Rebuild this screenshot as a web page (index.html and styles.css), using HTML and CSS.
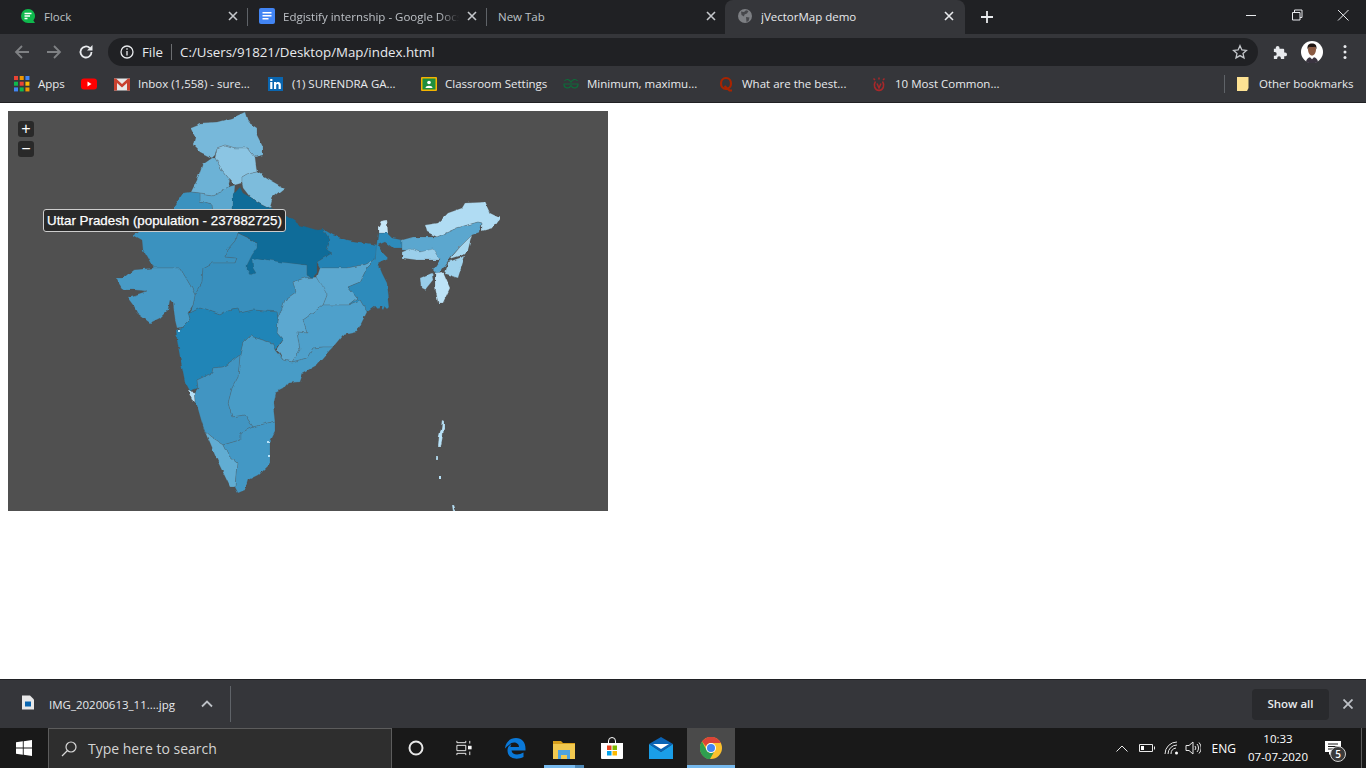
FILE: index.html
```html
<!DOCTYPE html>
<html lang="en">
<head>
    <meta charset="UTF-8">
    <title>jVectorMap demo</title>
    <link rel="stylesheet" href="styles.css">
</head>
<body>
    <div class="tabbar">
        <div class="tab">
            <svg class="fav" viewBox="0 0 16 16"><path class="g-green" d="M8 1a7 7 0 1 0 0 14h7l-1.600-2.600A7 7 0 0 0 8 1z"/><path class="g-white" d="M4.500 4.800h7v1.500h-7zM4.500 7.300h5.500v1.500H4.500zM4.500 9.800h3v1.500h-3z"/></svg>
            <span class="tab-title">Flock</span>
            <svg class="tab-x" viewBox="0 0 10 10"><path d="M1 1l8 8M9 1l-8 8"/></svg>
        </div>
        <div class="tab sep">
            <svg class="fav" viewBox="0 0 16 16"><rect class="g-blue" width="16" height="16" rx="2"/><path class="g-white" d="M3.500 4h9v1.500h-9zM3.500 7h9v1.500h-9zM3.500 10h6v1.500h-6z"/></svg>
            <span class="tab-title fade">Edgistify internship - Google Docs</span>
            <svg class="tab-x" viewBox="0 0 10 10"><path d="M1 1l8 8M9 1l-8 8"/></svg>
        </div>
        <div class="tab sep nofav">
            <span class="tab-title">New Tab</span>
            <svg class="tab-x" viewBox="0 0 10 10"><path d="M1 1l8 8M9 1l-8 8"/></svg>
        </div>
        <div class="tab active">
            <svg class="fav" viewBox="0 0 16 16"><circle class="g-grey" cx="8" cy="8" r="7"/><path class="g-dark" d="M4 3.500l3 .5 2-1.800 2.500.8-1.500 2.500-2.500 1-.5 2-2.500-1.500zM9 9l3.500.5-1 3.500-2 1z"/></svg>
            <span class="tab-title">jVectorMap demo</span>
            <svg class="tab-x" viewBox="0 0 10 10"><path d="M1 1l8 8M9 1l-8 8"/></svg>
        </div>
        <svg class="newtab" viewBox="0 0 12 12"><path d="M6 0v12M0 6h12"/></svg>
        <div class="winbtns">
            <svg viewBox="0 0 46 20"><path d="M18 10.500h10"/></svg>
            <svg viewBox="0 0 46 20"><path d="M18.500 7.500h7.500v7.500h-7.500zM20.500 7.500v-2.500h7.500v7.500h-2"/></svg>
            <svg viewBox="0 0 46 20"><path d="M18 5l10.500 10.500M28.500 5L18 15.500"/></svg>
        </div>
    </div>

    <div class="toolbar">
        <svg class="nav dim" viewBox="0 0 16 16"><path d="M15 8H2M8 2L2 8l6 6"/></svg>
        <svg class="nav dim" viewBox="0 0 16 16"><path d="M1 8h13M8 2l6 6-6 6"/></svg>
        <svg class="nav" viewBox="0 0 16 16"><path d="M13.500 8a5.500 5.500 0 1 1-1.700-4"/><path class="g-light" d="M14.500 1v5.500H9z"/></svg>
        <div class="omnibox">
            <svg class="info" viewBox="0 0 14 14"><circle cx="7" cy="7" r="6"/><path d="M7 6v4.500M7 3.300v1.500"/></svg>
            <span class="scheme">File</span>
            <span class="url">C:/Users/91821/Desktop/Map/index.html</span>
            <svg class="star" viewBox="0 0 16 16"><path d="M8 1.700l1.900 4.200 4.500.5-3.400 3 1 4.500L8 11.600l-4 2.300 1-4.500-3.400-3 4.500-.5z"/></svg>
        </div>
        <svg class="puzzle" viewBox="0 0 16 16"><path d="M6 1a2 2 0 0 1 2 2v1h4a1 1 0 0 1 1 1v3h1a2 2 0 1 1 0 4h-1v3H9.500v-1a2 2 0 1 0-4 0v1H2v-3.500h1a2 2 0 1 0 0-4H2V4h2V3a2 2 0 0 1 2-2z"/></svg>
        <svg class="avatar" viewBox="0 0 22 22"><circle class="g-white" cx="11" cy="11" r="11"/><path class="g-skin" d="M7 8c0-3 1.800-4.500 4-4.500S15 5 15 8c0 4-1.800 6.500-4 6.500S7 12 7 8z"/><path class="g-hair" d="M6.500 8.500C6 4 8 2.500 11 2.500s5 1.500 4.500 6c-.4-1.800-1-2.500-2-2.800-1.700.4-3.600.4-5 0-1 .4-1.600 1.200-2 2.800z"/><path class="g-shirt" d="M5 20.500c.5-2.500 2-3.800 4-4.300l2 2 2-2c2 .5 3.500 1.800 4 4.300a11 11 0 0 1-12 0z"/></svg>
        <svg class="menu" viewBox="0 0 4 16"><circle cx="2" cy="2.500" r="1.500"/><circle cx="2" cy="8" r="1.500"/><circle cx="2" cy="13.500" r="1.500"/></svg>
    </div>

    <div class="bookmarks">
        <div class="bm">
            <svg class="fav" viewBox="0 0 14 14"><rect class="g-red" width="3.500" height="3.500"/><rect class="g-orange" x="5" width="3.500" height="3.500"/><rect class="g-blue" x="10" width="3.500" height="3.500"/><rect class="g-green" y="5" width="3.500" height="3.500"/><rect class="g-red" x="5" y="5" width="3.500" height="3.500"/><rect class="g-yellow" x="10" y="5" width="3.500" height="3.500"/><rect class="g-blue" y="10" width="3.500" height="3.500"/><rect class="g-green" x="5" y="10" width="3.500" height="3.500"/><rect class="g-orange" x="10" y="10" width="3.500" height="3.500"/></svg>
            <span>Apps</span>
        </div>
        <div class="bm">
            <svg class="fav" viewBox="0 0 16 16"><rect class="g-yt" y="2.500" width="16" height="11" rx="3"/><path class="g-white" d="M6.500 5.500l4 2.500-4 2.500z"/></svg>
        </div>
        <div class="bm">
            <svg class="fav" viewBox="0 0 16 16"><rect class="g-paper" y="2.500" width="16" height="12"/><path class="g-gm" d="M0 2.500h2L8 8l6-5.500h2v12h-3V7L8 11.500 3 7v7.500H0z"/></svg>
            <span>Inbox (1,558) - sure...</span>
        </div>
        <div class="bm">
            <svg class="fav" viewBox="0 0 16 16"><rect class="g-li" y="1" width="15" height="14"/><path class="g-white" d="M2.200 6h2.200v7H2.200zM2.200 3h2.200v2H2.200zM6 6h2.100v1c.8-1.500 4.700-1.900 4.700 1.800V13h-2.200V9.300c0-1.800-2.400-1.600-2.400 0V13H6z"/></svg>
            <span>(1) SURENDRA GA...</span>
        </div>
        <div class="bm">
            <svg class="fav" viewBox="0 0 16 16"><rect class="g-cls" y="1" width="16" height="14" rx="1"/><rect class="g-clsgreen" x="1.500" y="2.500" width="13" height="11"/><circle class="g-white" cx="8" cy="6.500" r="1.800"/><path class="g-white" d="M4.500 12c0-3 7-3 7 0z"/></svg>
            <span>Classroom Settings</span>
        </div>
        <div class="bm">
            <svg class="fav" viewBox="0 0 16 16"><path class="gfg" d="M8 8h7a3.500 3.500 0 0 1-6.800 1.500M8 8H1a3.500 3.500 0 0 0 6.800 1.500M8.200 6.500A3.500 3.500 0 0 1 14.500 5M7.800 6.500A3.500 3.500 0 0 0 1.500 5"/></svg>
            <span>Minimum, maximu...</span>
        </div>
        <div class="bm">
            <svg class="fav" viewBox="0 0 16 16"><path class="quora" d="M8 2C5 2 3 4.500 3 7.500S5 13 8 13s5-2.500 5-5.500S11 2 8 2zM6.500 10l5 4.500h2.500"/></svg>
            <span>What are the best...</span>
        </div>
        <div class="bm">
            <svg class="fav" viewBox="0 0 16 16"><path class="hack" d="M4.500 5.500C2 9 3.500 14 8 14.500 12.500 14 14 9 11.500 5.500M8 3.500v-2M4 4L2.500 2.500M12 4l1.500-1.500M6 7.500L8 12l2-4.500"/></svg>
            <span>10 Most Common...</span>
        </div>
        <div class="bm-other">
            <svg class="folder" viewBox="0 0 12 14"><path d="M0 0h11.500v11L10 14H0z"/></svg>
            <span>Other bookmarks</span>
        </div>
    </div>

    <div class="page">
        <div class="map">
            <svg class="map-svg" viewBox="8 111 600 400">
                <defs>
                    <filter id="rough" x="0" y="0" width="100%" height="100%" color-interpolation-filters="sRGB">
                        <feTurbulence type="fractalNoise" baseFrequency="0.13" numOctaves="2" seed="4"/>
                        <feDisplacementMap in="SourceGraphic" scale="3.500" xChannelSelector="R" yChannelSelector="G"/>
                    </filter>
                </defs>
                <g class="states">
                    <polygon class="jk" points="190,127 200,123 217,122 232,118 245,112 248,122 257,128 257,135 263,147 263,155 255,157 248,148 235,148 225,145 217,148 215,155 212,158 200,152 193,145 195,137"/>
                    <polygon class="hp" points="217,148 225,145 235,148 248,148 255,157 257,172 247,174 242,177 242,183 235,185 230,180 222,170 215,158"/>
                    <polygon class="pb" points="212,158 215,158 222,170 230,180 228,187 220,192 213,195 200,193 191,192 197,180 202,165"/>
                    <polygon class="uk" points="242,177 247,174 257,172 270,180 284,188 273,197 270,208 260,203 250,197 243,188 242,183"/>
                    <polygon class="hr" points="213,195 220,192 228,187 235,185 233,208 238,233 225,228 213,215 212,205 200,202 200,193"/>
                    <polygon class="rj" points="191,192 200,193 200,202 212,205 213,215 233,228 238,233 236,240 227,250 225,257 237,258 235,263 212,263 203,268 202,282 195,295 190,285 180,268 153,268 150,262 143,250 142,240 133,235 173,208 183,193"/>
                    <polygon class="mp" points="238,233 257,242 260,258 307,265 307,275 312,278 317,277 305,278 293,282 296,292 285,300 278,320 277,312 253,310 240,313 238,308 228,310 220,315 200,308 190,313 193,305 195,295 202,282 203,268 212,263 235,263 237,258 225,257 227,250 236,240"/>
                    <polygon class="up" points="240,187 243,193 250,197 260,203 270,208 285,215 300,225 317,230 323,229 330,240 327,250 332,253 317,262 317,273 312,278 307,275 307,265 280,262 257,258 252,259 253,268 256,273 251,275 247,270 247,265 252,255 257,248 257,242 247,237 238,233 233,208 233,195"/>
                    <polygon class="br" points="323,229 333,235 347,240 360,242 378,245 375,260 363,265 347,268 320,268 317,262 332,253 327,250 330,240"/>
                    <polygon class="jh" points="317,277 320,268 347,268 363,265 375,260 367,268 360,282 348,287 357,298 348,305 333,305 323,305 327,295"/>
                    <polygon class="wb" points="378,233 387,233 392,238 402,240 402,248 393,248 385,242 378,245 383,253 388,258 378,263 382,273 387,283 390,307 388,309 385,306 383,310 380,306 378,309 375,306 367,312 360,300 348,305 357,298 348,287 360,282 367,268 375,260"/>
                    <polygon class="sk" points="378,227 381,221 387,220 388,233 378,233"/>
                    <polygon class="cg" points="293,282 305,278 317,277 322,285 327,295 323,305 313,313 303,320 307,333 297,332 300,350 292,362 283,360 277,350 283,340 277,333 278,320 285,300 296,292"/>
                    <polygon class="od" points="323,305 333,305 348,305 360,300 367,312 363,320 357,332 343,335 333,347 323,347 313,348 307,358 292,362 300,350 297,332 307,333 303,320 313,313"/>
                    <polygon class="gj" points="116,278 123,278 133,270 153,268 180,268 190,285 195,295 193,305 188,313 190,320 183,327 177,328 175,320 173,303 170,300 168,310 160,318 150,323 137,313 133,305 127,297 135,295 147,291 135,290 123,290 118,282"/>
                    <polygon class="mh" points="188,313 190,313 200,308 220,315 228,310 238,308 240,313 253,310 277,312 278,320 277,333 283,340 275,350 272,343 250,336 243,343 240,355 223,367 213,368 212,373 197,380 198,388 190,391 185,382 180,357 177,340 176,330 183,327 190,320"/>
                    <polygon class="ap" points="250,336 272,343 275,350 283,360 292,362 307,358 313,348 323,347 333,347 330,350 317,365 303,373 300,382 288,383 283,389 275,393 273,403 275,421 253,427 245,415 232,417 228,403 232,388 238,377 240,355 243,343"/>
                    <polygon class="ka" points="197,380 212,373 213,368 223,367 240,355 238,377 232,388 228,403 232,417 245,415 253,427 240,433 240,440 223,445 212,438 205,432 202,423 196,402 195,392 198,388"/>
                    <polygon class="kl" points="205,432 212,438 223,445 228,455 237,463 235,487 230,487 217,460"/>
                    <polygon class="tn" points="223,445 240,440 240,433 253,427 275,421 275,432 270,442 270,463 258,475 248,480 245,490 238,493 235,487 237,463 228,455"/>
                    <polygon class="ga" points="188,391 195,392 196,402 192,400"/>
                    <polygon class="ar" points="425,225 438,223 448,213 462,208 465,203 485,202 490,213 500,218 493,228 482,231 482,223 478,222 457,228 437,237 427,232"/>
                    <polygon class="as" points="402,240 413,237 437,237 457,228 478,222 482,223 480,232 472,235 460,247 450,258 442,270 437,275 433,270 440,260 433,250 422,252 402,250"/>
                    <polygon class="nl" points="472,235 468,250 463,255 450,259 460,247"/>
                    <polygon class="mn" points="448,262 465,256 458,278 445,274"/>
                    <polygon class="ml" points="402,252 410,249 420,252 433,249 440,260 417,260 402,258"/>
                    <polygon class="tr" points="420,278 432,273 433,280 425,290 421,288"/>
                    <polygon class="mz" points="435,273 443,272 450,288 443,303 438,303 435,287"/>
                    <polygon class="an" points="442,420 444,421 444,428 443,436 441,447 438,447 439,436 441,428"/>
                    <polygon class="an" points="436,456 438,456 438,460 436,460"/>
                    <polygon class="an" points="452,505 454,505 456,511 453,511"/>
                    <rect class="an" x="439" y="477" width="2" height="2"/>
                    <rect class="an" x="178" y="329" width="2" height="2"/>
                    <rect class="an" x="268" y="441" width="2" height="2"/>
                    <rect class="an" x="268" y="455" width="2" height="2"/>
                </g>
            </svg>
            <div class="zoom zoom-in">+</div>
            <div class="zoom zoom-out">&minus;</div>
            <div class="tip">Uttar Pradesh (population - 237882725)</div>
        </div>
    </div>

    <div class="shelf">
        <svg class="file" viewBox="0 0 12 14"><path class="g-paper" d="M0 0h8l4 4v10H0z"/><rect class="g-li" x="3" y="6" width="6" height="5"/></svg>
        <span class="file-name">IMG_20200613_11....jpg</span>
        <svg class="chev" viewBox="0 0 12 8"><path d="M1 6.500l5-5 5 5"/></svg>
        <div class="shelf-sep"></div>
        <div class="show-all">Show all</div>
        <svg class="shelf-x" viewBox="0 0 10 10"><path d="M.5.500l9 9M9.500.500l-9 9"/></svg>
    </div>

    <div class="taskbar">
        <div class="tb-btn">
            <svg class="ico16" viewBox="0 0 16 16"><path class="g-white" d="M0 2.300l6.800-1v6.300H0zM7.700 1.200L16 0v7.600H7.700zM0 8.400h6.800v6.300l-6.800-1zM7.700 8.400H16V16l-8.300-1.200z"/></svg>
        </div>
        <div class="search">
            <svg class="lens" viewBox="0 0 16 16"><circle cx="10" cy="6" r="5"/><path d="M6.500 9.500L1 15"/></svg>
            <span>Type here to search</span>
        </div>
        <div class="tb-btn">
            <svg class="ico16" viewBox="0 0 16 16"><circle class="ring" cx="8" cy="8" r="6.500"/></svg>
        </div>
        <div class="tb-btn">
            <svg class="ico16 thin" viewBox="0 0 18 16"><path d="M1 0v2h10V0M1 16v-2h10v2M1 5h10v6H1z"/><path d="M15.500 0v3M15.500 12v4"/><rect class="g-white" x="14" y="6" width="3" height="3"/></svg>
        </div>
        <div class="tb-btn first-app">
            <svg class="ico22" viewBox="0 0 22 22"><path class="g-edge" d="M1 11C2 4 7 1 12 1c6 0 9.500 4.500 9.500 10.500v2H7.500c.5 4.500 7 5 12 2v4.500c-7 3.500-16 1.500-16-6.500 0-3 1.500-5 4-6.500-.7 1-1 2-1.100 3h8.600c0-5-7-6-10-2-1.500 1-2.500 2-4 3.500z"/></svg>
        </div>
        <div class="tb-btn running">
            <svg class="ico22" viewBox="0 0 22 18"><path class="g-folderdk" d="M0 0h8l2 2h12v4H0z"/><rect class="g-folder" y="3" width="22" height="15"/><path class="g-sky" d="M5 9h12v9h-3v-4H8v4H5z"/></svg>
        </div>
        <div class="tb-btn">
            <svg class="ico22" viewBox="0 0 22 22"><path class="bag" d="M7.500 6V4a3.500 3.500 0 0 1 7 0v2"/><path class="g-white" d="M0 6h22v15a1 1 0 0 1-1 1H1a1 1 0 0 1-1-1z"/><rect class="g-msred" x="6" y="8.500" width="4.500" height="4.500"/><rect class="g-msgreen" x="11.500" y="8.500" width="4.500" height="4.500"/><rect class="g-msblue" x="6" y="14" width="4.500" height="4.500"/><rect class="g-msyellow" x="11.500" y="14" width="4.500" height="4.500"/></svg>
        </div>
        <div class="tb-btn mail">
            <svg class="ico24" viewBox="0 0 24 22"><path class="g-maildk" d="M0 7l12-7 12 7-12 8z"/><path class="g-white" d="M4 7h16l-8 5z"/><path class="g-mail" d="M0 7l12 8 12-8v15H0z"/></svg>
        </div>
        <div class="tb-btn chrome">
            <svg class="ico22" viewBox="0 0 22 22"><circle class="g-chyellow" cx="11" cy="11" r="11"/><path class="g-chred" d="M2 4.600A11 11 0 0 1 21 6H11a5 5 0 0 0-5 3.500z"/><path class="g-chgreen" d="M2 4.600L6.500 13 10 17l-3 4.500A11 11 0 0 1 2 4.600z"/><path class="g-chgreen" d="M6.500 13a5 5 0 0 0 7.500 2l-4 7a11 11 0 0 1-4-.5l3-5z"/><circle class="g-white" cx="11" cy="11" r="5"/><circle class="g-chblue" cx="11" cy="11" r="4"/></svg>
        </div>
        <div class="tray">
            <svg class="tray-up" viewBox="0 0 12 7"><path d="M.5 6.500L6 1l5.500 5.500"/></svg>
            <svg class="tray-bat" viewBox="0 0 16 10"><path d="M.5 1.500h13v7H.5zM15.500 3.500v3"/><rect class="g-white" x="2" y="3" width="3" height="4"/></svg>
            <svg class="tray-wifi" viewBox="0 0 16 14"><path d="M1 13A12 12 0 0 1 13 1M4 13a9 9 0 0 1 9-9M7 13a6 6 0 0 1 5-6"/><circle class="g-white" cx="12.500" cy="12" r="1.500"/></svg>
            <svg class="tray-vol" viewBox="0 0 16 14"><path d="M1 4.500h3L8 1v12L4 9.500H1zM10 5a3 3 0 0 1 0 4M12 3a6 6 0 0 1 0 8M14 1.500a8 8 0 0 1 0 11"/></svg>
            <span class="lang">ENG</span>
            <div class="clock"><span>10:33</span><span>07-07-2020</span></div>
            <div class="notif">
                <svg viewBox="0 0 16 16"><path class="g-white" d="M0 1h16v11H7l-3 3v-3H0z"/><path class="notif-lines" d="M3 4h10M3 6.500h10M3 9h7"/></svg>
                <span class="badge">5</span>
            </div>
            <div class="show-desktop"></div>
        </div>
    </div>
</body>
</html>
```

FILE: styles.css
```css
html, body {
    margin: 0;
    padding: 0;
}

body {
    width: 1366px;
    height: 768px;
    overflow: hidden;
    display: flex;
    flex-direction: column;
    font-family: "Open Sans", "Noto Sans", sans-serif;
    background: #fff;
}

svg {
    display: block;
    flex: none;
}

/* browser tabs */
.tabbar {
    height: 34px;
    background: #202124;
    display: flex;
    align-items: flex-end;
    padding-left: 8px;
    color: #bdc1c6;
    font-size: 11.500px;
}

.tab {
    width: 239px;
    height: 34px;
    box-sizing: border-box;
    padding: 0 8px 2px 12px;
    display: flex;
    align-items: center;
    position: relative;
}

.tab.sep::before {
    content: "";
    position: absolute;
    left: 0;
    top: 8px;
    height: 18px;
    width: 1px;
    background: #5f6368;
}

.tab.active {
    background: #35363a;
    color: #e8eaed;
    border-radius: 8px 8px 0 0;
    width: 240px;
    padding-right: 11px;
}

.fav {
    width: 16px;
    height: 16px;
}

.tab .fav {
    margin-right: 8px;
}

.tab-title {
    flex: 1;
    overflow: hidden;
    white-space: nowrap;
}

.tab-title.fade {
    -webkit-mask-image: linear-gradient(to right, #000 88%, transparent 99%);
    mask-image: linear-gradient(to right, #000 88%, transparent 99%);
}

.tab-x {
    width: 10px;
    height: 10px;
    fill: none;
    stroke: #c4c7cb;
    stroke-width: 1.600;
    margin-left: 6px;
    margin-right: 1px;
}

.tab.active .tab-x {
    stroke: #e8eaed;
    margin-right: 0;
}

.newtab {
    width: 12px;
    height: 12px;
    margin: 0 0 11px 16px;
    fill: none;
    stroke: #e8eaed;
    stroke-width: 1.800;
}

.winbtns {
    margin-left: auto;
    display: flex;
    align-self: flex-start;
    margin-top: 5px;
}

.winbtns svg {
    width: 46px;
    height: 20px;
    fill: none;
    stroke: #e8eaed;
    stroke-width: 1;
}

/* address bar */
.toolbar {
    height: 32px;
    box-sizing: border-box;
    padding: 4px 0 0 14px;
    background: #35363a;
    display: flex;
    align-items: center;
}

.nav {
    width: 16px;
    height: 16px;
    margin-right: 16px;
    fill: none;
    stroke: #e8eaed;
    stroke-width: 1.800;
}

.nav.dim {
    stroke: #7f8184;
}

.g-light {
    fill: #e8eaed;
    stroke: none;
}

.omnibox {
    width: 1150px;
    height: 28px;
    margin-left: -2px;
    background: #202124;
    border-radius: 14px;
    display: flex;
    align-items: center;
    padding: 0 10px 0 12px;
    box-sizing: border-box;
    color: #e8eaed;
    font-size: 13.300px;
}

.info {
    width: 14px;
    height: 14px;
    fill: none;
    stroke: #e8eaed;
    stroke-width: 1.300;
}

.scheme {
    margin-left: 8px;
    padding-right: 8px;
    border-right: 1px solid #6b6d70;
    line-height: 16px;
}

.url {
    margin-left: 8px;
}

.star {
    margin-left: auto;
    width: 16px;
    height: 16px;
    fill: none;
    stroke: #c4c7cb;
    stroke-width: 1.300;
}

.puzzle {
    width: 15px;
    height: 15px;
    margin-left: 14px;
    fill: #e8eaed;
}

.avatar {
    width: 22px;
    height: 22px;
    margin-left: 14px;
}

.menu {
    width: 4px;
    height: 16px;
    margin-left: 20px;
    fill: #e8eaed;
}

/* bookmarks bar */
.bookmarks {
    height: 37px;
    background: #35363a;
    border-bottom: 1px solid #202124;
    box-sizing: border-box;
    padding: 0 0 1px 14px;
    display: grid;
    grid-template-columns: 67px 33px 154px 153px 142px 155px 153px 354px 1fr;
    align-items: center;
    color: #e8eaed;
    font-size: 11.500px;
}

.bm {
    display: flex;
    align-items: center;
    gap: 8px;
    white-space: nowrap;
}

.bm-other {
    display: flex;
    align-items: center;
    border-left: 1px solid #5f6368;
    height: 18px;
    margin-left: -1px;
    padding-left: 12px;
    white-space: nowrap;
}

.folder {
    width: 12px;
    height: 14px;
    margin-right: 10px;
    fill: #fde293;
}

.gfg {
    fill: none;
    stroke: #0f6a3a;
    stroke-width: 1.200;
}

.quora {
    fill: none;
    stroke: #a82400;
    stroke-width: 2.200;
}

.hack {
    fill: none;
    stroke: #a8282a;
    stroke-width: 1.500;
}

/* page */
.page {
    flex: 1;
    padding: 8px;
    background: #fff;
}

.map {
    width: 600px;
    height: 400px;
    position: relative;
    overflow: hidden;
    background: #505050;
}

.map-svg {
    width: 600px;
    height: 400px;
}

.states {
    filter: url(#rough);
}

.states polygon {
    stroke: #505050;
    stroke-opacity: 0.3;
    stroke-width: 0.7;
}

.jk { fill: #77b8da; }
.hp { fill: #8bc5e3; }
.pb { fill: #6cb2d6; }
.uk { fill: #7dbcdc; }
.hr { fill: #5ca8cf; }
.rj { fill: #3b92bf; }
.mp { fill: #388fbd; }
.up { fill: #0f6c99; }
.br { fill: #2383b5; }
.jh { fill: #5aa7cf; }
.wb { fill: #2d8bbb; }
.sk { fill: #c6e8fa; }
.cg { fill: #5ca8d0; }
.od { fill: #4ea0cb; }
.gj { fill: #479ac6; }
.mh { fill: #2085b7; }
.ap { fill: #489cc7; }
.ka { fill: #4195c2; }
.kl { fill: #61add3; }
.tn { fill: #4398c5; }
.ga { fill: #b6dff5; }
.ar { fill: #b0dcf3; }
.as { fill: #5ba7cf; }
.nl { fill: #a8d8f0; }
.mn { fill: #9fd2ec; }
.ml { fill: #9bcfeb; }
.tr { fill: #98cde9; }
.mz { fill: #bde3f7; }
.an { fill: #b8e2f8; }

.zoom {
    position: absolute;
    left: 10px;
    width: 16px;
    height: 16px;
    border-radius: 3px;
    background: #292929;
    color: #fff;
    font: 16px/15px "Liberation Sans", Arial, sans-serif;
    text-align: center;
}

.zoom-in {
    top: 10px;
}

.zoom-out {
    top: 30px;
}

.tip {
    position: absolute;
    left: 35px;
    top: 98px;
    padding: 3px;
    border: 1px solid #cdcdcd;
    border-radius: 3px;
    background: #292929;
    color: #fff;
    font: 13.330px/15px "Liberation Sans", Arial, sans-serif;
    -webkit-text-stroke: 0.25px #fff;
    white-space: nowrap;
}

/* downloads shelf */
.shelf {
    height: 49px;
    box-sizing: border-box;
    background: #35363a;
    border-top: 1px solid #202124;
    display: flex;
    align-items: center;
    padding-left: 22px;
    color: #e8eaed;
    font-size: 11.500px;
}

.file {
    width: 12px;
    height: 15px;
    margin-bottom: 4px;
}

.file-name {
    margin-left: 15px;
    width: 152px;
    white-space: nowrap;
}

.chev {
    width: 12px;
    height: 8px;
    fill: none;
    stroke: #bdc1c6;
    stroke-width: 1.800;
}

.shelf-sep {
    width: 1px;
    height: 36px;
    background: #5f6368;
    margin-left: 17px;
}

.show-all {
    margin-left: auto;
    width: 77px;
    height: 31px;
    line-height: 30px;
    text-align: center;
    border-radius: 4px;
    background: #292a2d;
    font-weight: 600;
}

.shelf-x {
    width: 10px;
    height: 10px;
    margin: 0 13px 0 14px;
    fill: none;
    stroke: #bdc1c6;
    stroke-width: 1.800;
}

/* windows taskbar */
.taskbar {
    height: 40px;
    background: #191919;
    display: flex;
    color: #fff;
    font-size: 12px;
}

.tb-btn {
    width: 48px;
    height: 40px;
    box-sizing: border-box;
    display: flex;
    align-items: center;
    justify-content: center;
}

.first-app {
    margin-left: 3px;
}

.running {
    position: relative;
    margin-left: 1px;
    padding-top: 3px;
}

.running::after {
    content: "";
    position: absolute;
    left: 4px;
    right: 4px;
    bottom: 0;
    height: 3px;
    background: linear-gradient(to right, #76b9ed 78%, #4d87b5 78%);
}

.mail {
    margin-left: 1px;
}

.chrome {
    margin-left: 2px;
    background: #4a4a4a;
    border-bottom: 3px solid #76b9ed;
    padding-top: 3px;
}

.ico16 {
    width: 16px;
    height: 16px;
}

.thin {
    fill: none;
    stroke: #fff;
    stroke-width: 1;
}

.ring {
    fill: none;
    stroke: #e8e8e8;
    stroke-width: 2;
}

.ico22 {
    width: 22px;
    height: 22px;
}

.ico24 {
    width: 24px;
    height: 22px;
}

.search {
    width: 344px;
    height: 40px;
    box-sizing: border-box;
    background: #2e2e2e;
    border: 1px solid #5c5c5c;
    border-bottom: 0;
    display: flex;
    align-items: center;
    padding-left: 12px;
    font-size: 14px;
    color: #d4d4d4;
}

.lens {
    width: 16px;
    height: 16px;
    margin-right: 11px;
    fill: none;
    stroke: #d8d8d8;
    stroke-width: 1.200;
}

.tray {
    margin-left: auto;
    display: flex;
    align-items: center;
    padding-right: 4px;
}

.tray svg {
    fill: none;
    stroke: #e8e8e8;
    stroke-width: 1;
}

.tray .g-white {
    fill: #fff;
    stroke: none;
}

.tray-up {
    width: 12px;
    height: 7px;
}

.tray-bat {
    width: 16px;
    height: 10px;
    margin-left: 11px;
}

.tray-wifi {
    width: 16px;
    height: 14px;
    margin-left: 9px;
}

.tray-vol {
    width: 16px;
    height: 14px;
    margin-left: 5px;
}

.lang {
    margin-left: 11px;
}

.clock {
    width: 70px;
    margin-left: 7px;
    display: flex;
    flex-direction: column;
    align-items: center;
    font-size: 11.500px;
    line-height: 18px;
}

.notif {
    position: relative;
    width: 18px;
    height: 16px;
    margin-left: 11px;
}

.notif svg {
    width: 18px;
    height: 16px;
    stroke: none;
}

.tray .notif-lines {
    stroke: #191919;
}

.badge {
    position: absolute;
    left: 6px;
    top: 6px;
    width: 14px;
    height: 14px;
    border-radius: 50%;
    border: 1px solid #cfcfcf;
    background: #3a3a3a;
    font-size: 10px;
    line-height: 14px;
    text-align: center;
    font-weight: 600;
}

.show-desktop {
    width: 1px;
    height: 40px;
    margin-left: 19px;
    background: #5c5c5c;
}

/* icon colours */
.g-white { fill: #fff; }
.g-green { fill: #0fb84d; }
.g-blue { fill: #4285f4; }
.g-grey { fill: #7d7f83; }
.g-dark { fill: #46474b; }
.g-red { fill: #ea4335; }
.g-orange { fill: #f29900; }
.g-yellow { fill: #fbbc04; }
.g-yt { fill: #f00; }
.g-paper { fill: #e8e8e8; }
.g-gm { fill: #c8412f; }
.g-li { fill: #0a66b0; }
.g-cls { fill: #f4b400; }
.g-clsgreen { fill: #1e8e3e; }
.g-skin { fill: #8a5a42; }
.g-hair { fill: #1e1512; }
.g-shirt { fill: #3a3440; }
.g-edge { fill: #0a78d7; }
.g-folder { fill: #f2c94f; }
.g-folderdk { fill: #d89f1b; }
.g-sky { fill: #4ea2df; }
.bag { fill: none; stroke: #fff; stroke-width: 1; }
.g-msred { fill: #e8431f; }
.g-msgreen { fill: #7db900; }
.g-msblue { fill: #00a2ec; }
.g-msyellow { fill: #fcb900; }
.g-maildk { fill: #0a63b5; }
.g-mail { fill: #1a9ee8; }
.g-chyellow { fill: #fbc02d; }
.g-chred { fill: #db4437; }
.g-chgreen { fill: #2f9e4f; }
.g-chblue { fill: #4285f4; }
```
